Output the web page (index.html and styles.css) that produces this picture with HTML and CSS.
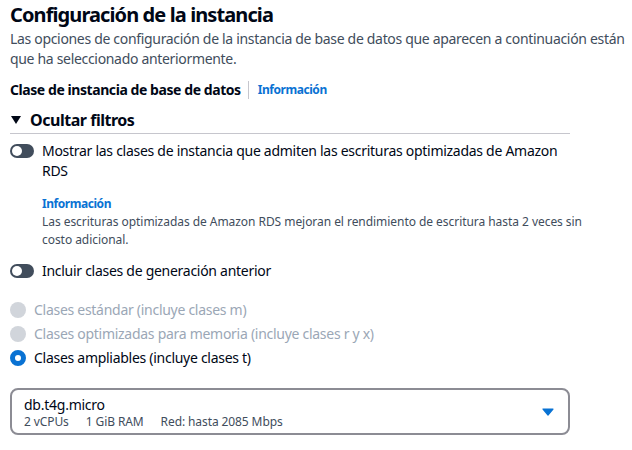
FILE: index.html
```html
<!DOCTYPE html>
<html lang="es">
<head>
<meta charset="utf-8">
<link rel="stylesheet" href="styles.css">
</head>
<body>
<div class="page">
  <h2 class="title">Configuración de la instancia</h2>
  <p class="desc">Las opciones de configuración de la instancia de base de datos que aparecen a continuación están que ha seleccionado anteriormente.</p>

  <div class="label-row">
    <span class="label">Clase de instancia de base de datos</span>
    <span class="divider"></span>
    <a class="info">Información</a>
  </div>

  <div class="expander">
    <span class="caret-down"></span>
    <span class="exp-title">Ocultar filtros</span>
  </div>

  <div class="toggle-row">
    <span class="toggle"><span class="knob"></span></span>
    <div class="toggle-text">Mostrar las clases de instancia que admiten las escrituras optimizadas de Amazon RDS</div>
  </div>
  <div class="toggle-desc">
    <a class="info">Información</a>
    <div class="small">Las escrituras optimizadas de Amazon RDS mejoran el rendimiento de escritura hasta 2 veces sin costo adicional.</div>
  </div>

  <div class="toggle-row second">
    <span class="toggle"><span class="knob"></span></span>
    <div class="toggle-text">Incluir clases de generación anterior</div>
  </div>

  <div class="radios">
    <div class="radio disabled"><span class="dot"></span><span>Clases estándar (incluye clases m)</span></div>
    <div class="radio disabled"><span class="dot"></span><span>Clases optimizadas para memoria (incluye clases r y x)</span></div>
    <div class="radio checked"><span class="dot"></span><span>Clases ampliables (incluye clases t)</span></div>
  </div>

  <div class="select">
    <div class="select-body">
      <div class="sel-main">db.t4g.micro</div>
      <div class="sel-tags"><span>2 vCPUs</span><span>1 GiB RAM</span><span>Red: hasta 2085 Mbps</span></div>
    </div>
    <svg class="sel-caret" width="12" height="8" viewBox="0 0 12 8"><path d="M1 1h10L6 7z" fill="#0972d3" stroke="#0972d3" stroke-width="1.2" stroke-linejoin="round"/></svg>
  </div>
</div>
</body>
</html>
```

FILE: styles.css
```css
* { box-sizing: border-box; }
html, body { margin: 0; padding: 0; background: #fff; }
body {
  font-family: "Noto Sans", "Open Sans", Arial, sans-serif;
  color: #000716;
  font-size: 14px;
  line-height: 20px;
  letter-spacing: -0.28px;
}
.page { padding: 2px 10px 0 10px; width: 632px; }
.title {
  margin: 0;
  font-size: 20px;
  line-height: 26px;
  font-weight: 700;
  letter-spacing: -0.9px;
}
.desc {
  margin: 1px 0 0 0;
  color: #414d5c;
  font-size: 14px;
  line-height: 20px;
  letter-spacing: -0.32px;
  width: 622px;
}
.label-row {
  display: flex;
  align-items: center;
  margin-top: 11px;
  height: 20px;
}
.label { font-weight: 700; font-size: 14px; letter-spacing: -0.43px; }
.divider {
  width: 1px;
  height: 18px;
  background: #c6c6cd;
  margin: 0 9px 0 7px;
}
.info {
  color: #0972d3;
  font-weight: 700;
  font-size: 12px;
  line-height: 16px;
  letter-spacing: -0.45px;
}
.expander {
  display: flex;
  align-items: center;
  margin-top: 8px;
  width: 560px;
  height: 24px;
  border-bottom: 1px solid #c6c6cd;
  box-sizing: content-box;
  padding-bottom: 1px;
}
.caret-down {
  width: 0; height: 0;
  border-left: 5px solid transparent;
  border-right: 5px solid transparent;
  border-top: 8px solid #000716;
  margin: 0 9px 0 1px;
}
.exp-title { font-weight: 700; font-size: 16px; line-height: 20px; letter-spacing: -0.47px; }
.toggle-row {
  display: flex;
  align-items: flex-start;
  margin-top: 7px;
}
.toggle-row.second { margin-top: 12px; }
.toggle {
  flex: none;
  width: 24px;
  height: 14px;
  border-radius: 7px;
  background: #414d5c;
  margin: 3px 8px 0 0;
  position: relative;
}
.knob {
  position: absolute;
  left: 2px; top: 2px;
  width: 10px; height: 10px;
  border-radius: 50%;
  background: #fff;
}
.toggle-text { font-size: 14px; line-height: 20px; width: 530px; }
.toggle-desc {
  margin: 14px 0 0 32px;
}
.toggle-desc .info { display: block; line-height: 18px; }
.small {
  color: #414d5c;
  font-size: 12px;
  line-height: 18px;
  letter-spacing: -0.05px;
  width: 545px;
}
.radios {
  margin-top: 19px;
  display: flex;
  flex-direction: column;
  gap: 4px;
}
.radio {
  display: flex;
  align-items: center;
  gap: 8px;
  height: 20px;
}
.dot {
  width: 16px; height: 16px;
  border-radius: 50%;
  flex: none;
}
.radio.disabled { color: #9ba7b6; }
.radio.disabled .dot { background: #d1d5db; }
.radio.checked .dot {
  background: #fff;
  border: 5px solid #0972d3;
}
.select {
  margin-top: 20px;
  width: 560px;
  height: 47px;
  border: 2px solid #8c8c94;
  border-radius: 8px;
  display: flex;
  align-items: center;
  padding: 2px 14px 0 12px;
}
.select-body { flex: 1; }
.sel-main { font-size: 14px; line-height: 18px; letter-spacing: -0.25px; }
.sel-tags {
  display: flex;
  gap: 17px;
  color: #414d5c;
  font-size: 12px;
  line-height: 16px;
  letter-spacing: -0.1px;
}
.sel-caret { flex: none; margin-top: -2px; }
```
